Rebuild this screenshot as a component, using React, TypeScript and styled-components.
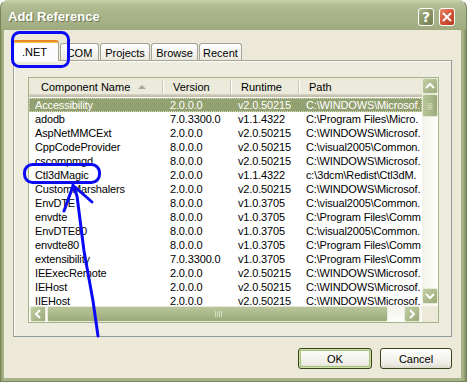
import styled, { createGlobalStyle } from "styled-components"

type Row = [string, string, string, string]

const rows: Row[] = [
  ["Accessibility", "2.0.0.0", "v2.0.50215", "C:\\WINDOWS\\Microsof."],
  ["adodb", "7.0.3300.0", "v1.1.4322", "C:\\Program Files\\Micro."],
  ["AspNetMMCExt", "2.0.0.0", "v2.0.50215", "C:\\WINDOWS\\Microsof."],
  ["CppCodeProvider", "8.0.0.0", "v2.0.50215", "C:\\visual2005\\Common."],
  ["cscompmgd", "8.0.0.0", "v2.0.50215", "C:\\WINDOWS\\Microsof."],
  ["Ctl3dMagic", "2.0.0.0", "v1.1.4322", "c:\\3dcm\\Redist\\Ctl3dM."],
  ["CustomMarshalers", "2.0.0.0", "v2.0.50215", "C:\\WINDOWS\\Microsof."],
  ["EnvDTE", "8.0.0.0", "v1.0.3705", "C:\\visual2005\\Common."],
  ["envdte", "8.0.0.0", "v1.0.3705", "C:\\Program Files\\Comm"],
  ["EnvDTE80", "8.0.0.0", "v1.0.3705", "C:\\visual2005\\Common."],
  ["envdte80", "8.0.0.0", "v1.0.3705", "C:\\Program Files\\Comm"],
  ["extensibility", "7.0.3300.0", "v1.0.3705", "C:\\Program Files\\Comm"],
  ["IEExecRemote", "2.0.0.0", "v2.0.50215", "C:\\WINDOWS\\Microsof."],
  ["IEHost", "2.0.0.0", "v2.0.50215", "C:\\WINDOWS\\Microsof."],
  ["IIEHost", "2.0.0.0", "v2.0.50215", "C:\\WINDOWS\\Microsof."],
]

const tabs = [
  { label: ".NET", w: 46, active: true },
  { label: "COM", w: 39 },
  { label: "Projects", w: 50 },
  { label: "Browse", w: 47 },
  { label: "Recent", w: 43 },
]

const COLS = "134px 68px 68px 122px"

const GlobalStyle = createGlobalStyle`
  html, body { margin: 0; padding: 0; background: #fff; }
  body {
    font-family: "Liberation Sans", Arial, sans-serif;
    font-size: 11px;
    color: #000;
  }
`

export default function App() {
  return (
    <>
      <GlobalStyle />
      <Window>
        <TitleBar>
          <Title>Add Reference</Title>
          <Caps>
            <CapButton>?</CapButton>
            <CapButton $close>
              <svg width="10" height="10" viewBox="0 0 10 10">
                <path d="M1 1 L9 9 M9 1 L1 9" stroke="#fff" strokeWidth="2" />
              </svg>
            </CapButton>
          </Caps>
        </TitleBar>
        <Client>
          <TabStrip>
            {tabs.map((t) => (
              <Tab key={t.label} $active={t.active} $w={t.w}>
                {t.label}
              </Tab>
            ))}
          </TabStrip>
          <Panel>
            <ListFrame>
              <ListArea>
                <Header>
                  <HeaderCell>
                    Component Name <SortArrow />
                  </HeaderCell>
                  <HeaderCell>Version</HeaderCell>
                  <HeaderCell>Runtime</HeaderCell>
                  <HeaderCell>Path</HeaderCell>
                </Header>
                {rows.map((r, i) => (
                  <ItemRow key={r[0]} $selected={i === 0}>
                    {r.map((c, j) => (
                      <Cell key={j}>{c}</Cell>
                    ))}
                  </ItemRow>
                ))}
              </ListArea>
              <VScroll>
                <ScrollBtn>
                  <Chevron d="M4 10 L8 6 L12 10" />
                </ScrollBtn>
                <VThumb>
                  <Grip viewBox="0 0 16 22" width="16" height="22">
                    <path d="M5 8.5 H11 M5 10.5 H11 M5 12.5 H11 M5 14.5 H11" />
                  </Grip>
                </VThumb>
                <Track />
                <ScrollBtn>
                  <Chevron d="M4 6 L8 10 L12 6" />
                </ScrollBtn>
              </VScroll>
              <HScroll>
                <ScrollBtn>
                  <Chevron d="M10 4 L6 8 L10 12" />
                </ScrollBtn>
                <HThumb>
                  <Grip viewBox="0 0 12 16" width="12" height="16">
                    <path d="M3.5 5 V11 M5.5 5 V11 M7.5 5 V11 M9.5 5 V11" />
                  </Grip>
                </HThumb>
                <Track />
                <ScrollBtn>
                  <Chevron d="M6 4 L10 8 L6 12" />
                </ScrollBtn>
              </HScroll>
              <Corner />
            </ListFrame>
          </Panel>
          <ButtonRow>
            <PushButton $default>OK</PushButton>
            <PushButton>Cancel</PushButton>
          </ButtonRow>
        </Client>
        {/* hand-drawn annotations over the dialog */}
        <Markup width="467" height="382" viewBox="0 0 467 382">
          <rect x="11.5" y="31.5" width="56" height="34" rx="7" />
          <rect x="23.5" y="163.5" width="75" height="18" rx="8" />
          <path d="M97 335 L92 300 L83 250 L76 195 L72 184" />
          <path d="M63 210 L72 185 M91 201 L74 186" />
        </Markup>
      </Window>
    </>
  )
}

const Window = styled.div`
  position: relative;
  box-sizing: border-box;
  width: 467px;
  height: 382px;
  display: flex;
  flex-direction: column;
  background: linear-gradient(to right, #8e9b6b 0, #a7b288 2px, #a7b288 calc(100% - 3px), #7f8c5e 100%);
  border: 1px solid #76845a;
  border-top-color: #c4cca8;
  border-radius: 8px 8px 0 0;
  overflow: hidden;
`

const TitleBar = styled.div`
  height: 29px;
  display: flex;
  align-items: center;
  justify-content: space-between;
  padding: 0 11px 0 7px;
  background: linear-gradient(to bottom, #c9d1ac 0, #b6bf97 3px, #a9b48a 12px, #a5b086 22px, #9eaa7e 29px);
`

const Title = styled.div`
  font-size: 13px;
  font-weight: bold;
  color: #fff;
  text-shadow: 1px 1px 0 #6e7a4e;
  padding-top: 1px;
`

const Caps = styled.div`
  display: flex;
  gap: 5px;
  margin-top: 2px;
`

const CapButton = styled.div<{ $close?: boolean }>`
  box-sizing: border-box;
  width: 16px;
  height: 18px;
  display: flex;
  align-items: center;
  justify-content: center;
  border: 1px solid #fff;
  border-radius: 3px;
  color: #fff;
  font-family: "DejaVu Sans", sans-serif;
  font-size: 14px;
  font-weight: bold;
  background: ${(p) =>
    p.$close
      ? "linear-gradient(135deg, #e88a6c 0, #d5583a 45%, #b8391f 100%)"
      : "linear-gradient(135deg, #aab58a 0, #8c9868 45%, #6f7c4c 100%)"};
`

const Client = styled.div`
  flex: 1;
  display: flex;
  flex-direction: column;
  margin: 0 5px 3px 3px;
  padding: 10px 9px 9px 9px;
  background: #ece9d8;
`

const TabStrip = styled.div`
  display: flex;
  align-items: flex-end;
  height: 20px;
`

const Tab = styled.div<{ $active?: boolean; $w: number }>`
  position: relative;
  z-index: ${(p) => (p.$active ? 2 : 0)};
  box-sizing: border-box;
  width: ${(p) => p.$w}px;
  height: ${(p) => (p.$active ? 21 : 17)}px;
  margin-bottom: ${(p) => (p.$active ? -1 : 0)}px;
  & + & {
    margin-left: ${(p) => (p.$active ? 0 : 1)}px;
  }
  &:nth-child(2) {
    margin-left: 0;
  }
  display: flex;
  align-items: center;
  justify-content: center;
  padding-top: ${(p) => (p.$active ? 0 : 1)}px;
  padding-right: ${(p) => (p.$active ? 3 : 0)}px;
  border: 1px solid #a2a597;
  border-bottom: none;
  border-top: ${(p) => (p.$active ? "2px solid #e68b2c" : "1px solid #a2a597")};
  border-radius: 3px 3px 0 0;
  box-shadow: ${(p) => (p.$active ? "inset 0 1px 0 #ffc73c" : "none")};
  background: ${(p) =>
    p.$active ? "#fcfcfe" : "linear-gradient(to bottom, #ffffff 0, #f4f3ee 60%, #e9e7dc 100%)"};
  white-space: nowrap;
`

const Panel = styled.div`
  position: relative;
  z-index: 1;
  box-sizing: border-box;
  height: 277px;
  display: flex;
  padding: 16px 12px 13px 14px;
  border: 1px solid #a2a597;
  border-right-color: #919b9c;
  border-bottom-color: #919b9c;
  background: #eeebdf;
  box-shadow: inset 1px 1px 0 #fbfaf5;
`

const ListFrame = styled.div`
  flex: 1;
  display: grid;
  grid-template-columns: 1fr 16px;
  grid-template-rows: 1fr 16px;
  border: 1px solid #a5b38a;
  background: #fff;
  overflow: hidden;
`

const ListArea = styled.div`
  overflow: hidden;
`

const Header = styled.div`
  display: grid;
  grid-template-columns: ${COLS};
  height: 19px;
  margin-bottom: 1px;
  background: linear-gradient(
    to bottom,
    #ebeadb 0,
    #ebeadb 16px,
    #d6d2c2 16px,
    #d0ccbc 17px,
    #c2bea9 18px
  );
`

const HeaderCell = styled.div`
  position: relative;
  display: flex;
  align-items: center;
  height: 16px;
  padding-left: 10px;
  padding-top: 1px;
  white-space: nowrap;
  &:first-child {
    padding-left: 12px;
  }
  &:not(:last-child)::after {
    content: "";
    position: absolute;
    right: 0;
    top: 3px;
    bottom: 1px;
    width: 1px;
    background: #c7c5b2;
    box-shadow: 1px 0 0 #fff;
  }
`

const SortArrow = styled.span`
  width: 0;
  height: 0;
  margin-left: 8px;
  border-left: 4px solid transparent;
  border-right: 4px solid transparent;
  border-bottom: 4px solid #aca899;
`

const ItemRow = styled.div<{ $selected?: boolean }>`
  display: grid;
  grid-template-columns: ${COLS};
  height: 14px;
  line-height: 14px;
  color: ${(p) => (p.$selected ? "#fff" : "#000")};
  background: ${(p) => (p.$selected ? "#93a070" : "transparent")};
  outline: ${(p) => (p.$selected ? "1px dotted #d4dcbf" : "none")};
  outline-offset: -1px;
`

const Cell = styled.div`
  padding-left: 7px;
  white-space: nowrap;
  overflow: hidden;
  letter-spacing: -0.15px;
  &:first-child {
    padding-left: 6px;
  }
`

const VScroll = styled.div`
  display: flex;
  flex-direction: column;
  padding-bottom: 2px;
  background: linear-gradient(to right, #f3f2ea, #fefefb);
`

const HScroll = styled.div`
  display: flex;
  padding-left: 1px;
  padding-right: 2px;
  background: linear-gradient(to bottom, #f3f2ea, #fefefb);
`

const Corner = styled.div`
  background: #ece9d8;
`

const ScrollBtn = styled.div`
  box-sizing: border-box;
  flex: none;
  width: 16px;
  height: 16px;
  border: 1px solid #e4ead5;
  border-radius: 2px;
  background: linear-gradient(135deg, #c3cea5 0, #aebc8e 50%, #9aaa78 100%);
  display: flex;
  align-items: center;
  justify-content: center;
`

const Chevron = ({ d }: { d: string }) => (
  <svg width="16" height="16" viewBox="0 0 16 16" style={{ margin: -1 }}>
    <path d={d} fill="none" stroke="#fff" strokeWidth="2" />
  </svg>
)

const VThumb = styled.div`
  box-sizing: border-box;
  height: 23px;
  border: 1px solid #e4ead5;
  border-radius: 2px;
  background: linear-gradient(to right, #b9c59a 0, #a8b688 60%, #9aa978 100%);
  display: flex;
  align-items: center;
  justify-content: center;
`

const HThumb = styled.div`
  box-sizing: border-box;
  width: 341px;
  margin-left: 1px;
  border: 1px solid #e4ead5;
  border-radius: 2px;
  background: linear-gradient(to bottom, #b9c59a 0, #a8b688 60%, #9aa978 100%);
  display: flex;
  align-items: center;
  justify-content: center;
`

const Grip = styled.svg`
  path {
    stroke: #d6dec2;
    stroke-width: 1;
    fill: none;
  }
`

const Track = styled.div`
  flex: 1;
`

const ButtonRow = styled.div`
  display: flex;
  justify-content: flex-end;
  gap: 8px;
  margin-top: 11px;
`

const PushButton = styled.div<{ $default?: boolean }>`
  box-sizing: border-box;
  width: ${(p) => (p.$default ? 74 : 72)}px;
  height: 21px;
  display: flex;
  align-items: center;
  justify-content: center;
  border: 1px solid #37441a;
  border-radius: 3px;
  background: linear-gradient(to bottom, #ffffff 0, #f6f5ef 40%, #ecebe4 80%, #d9d6c9 100%);
  box-shadow: ${(p) =>
    p.$default
      ? "inset 0 0 0 1px #cfe0a8, inset 0 0 0 2px #a7c07b"
      : "inset 0 -1px 0 #e0dccb"};
`

const Markup = styled.svg`
  position: absolute;
  z-index: 10;
  left: 0;
  top: 0;
  pointer-events: none;
  fill: none;
  stroke: #0a0af5;
  stroke-width: 3;
  stroke-linejoin: round;
  stroke-linecap: round;
`
